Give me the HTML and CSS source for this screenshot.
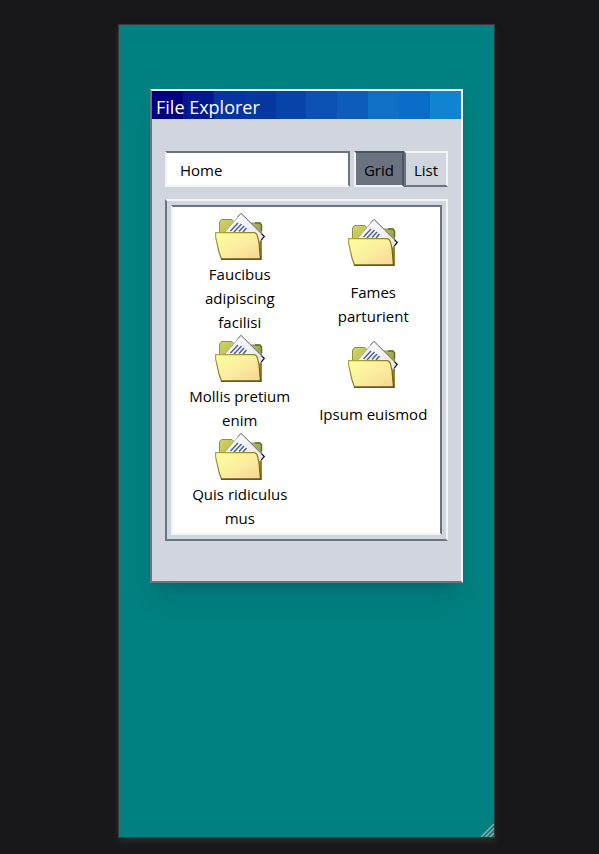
FILE: index.html
```html
<!DOCTYPE html>
<html lang="en">
<head>
<meta charset="utf-8">
<title>File Explorer</title>
<link rel="stylesheet" href="styles.css">
</head>
<body>
<svg class="defs" width="0" height="0" aria-hidden="true">
  <defs>
    <linearGradient id="front" x1="0" y1="0" x2="1" y2="1">
      <stop offset="0" stop-color="#ffffa2"/>
      <stop offset=".55" stop-color="#fbec9e"/>
      <stop offset="1" stop-color="#f5d592"/>
    </linearGradient>
    <linearGradient id="back" x1="0" y1="0" x2="1" y2="1">
      <stop offset="0" stop-color="#d3d565"/>
      <stop offset="1" stop-color="#7f8a36"/>
    </linearGradient>
    <linearGradient id="edge" x1="0" y1="0" x2="1" y2="1">
      <stop offset="0" stop-color="#b5a838"/>
      <stop offset="1" stop-color="#5c5114"/>
    </linearGradient>
    <linearGradient id="paper" x1="0" y1="0" x2="1" y2="1">
      <stop offset="0" stop-color="#ffffff"/>
      <stop offset="1" stop-color="#e6e6ec"/>
    </linearGradient>
    <symbol id="folder" viewBox="0 1 50 50">
      <path d="M4.500 23V11l2-2.500H17l3 3.500h25l1.500 2v34.500H7z" fill="url(#back)" stroke="#8e9635"/>
      <path d="M40 12h5l1.500 2v6" fill="none" stroke="#4f7435" stroke-width="1.500"/>
      <path d="M42 24h4l.5 24h-3z" fill="#8a7c2b"/>
      <path d="M26 2.300L49.300 25.500l-5 6L40 24H7.500z" fill="url(#paper)" stroke="#b3b3bb"/>
      <path d="M22.500 5.800L26 2.300 49.300 25.500l-5 6" fill="none" stroke="#77777f"/>
      <path d="M46.500 22.700l2.800 2.800-3 3.300" fill="none" stroke="#17171c" stroke-width="1.200"/>
      <path d="M15.500 20l7.500-8M19 21l7.500-8M24 20.500l5-5.500M28 21l3.500-4" stroke="#4d6690" stroke-width="1.500"/>
      <path d="M.6 21.600H39q2.500 0 3.500 3.500l1.500 6.500 1.500 16.500H6.500L4 41 .6 26z" fill="url(#front)" stroke="url(#edge)" stroke-width="1.200"/>
      <path d="M6 48.200h40.500" stroke="#67571c" stroke-width="1.500"/>
    </symbol>
  </defs>
</svg>
<main class="desktop">
  <section class="window" aria-label="File Explorer">
    <header class="titlebar"><h1>File Explorer</h1></header>
    <div class="body">
      <div class="toolbar">
        <input class="path" type="text" value="Home" aria-label="Path">
        <div class="views">
          <button class="view active" type="button" aria-pressed="true">Grid</button>
          <button class="view" type="button" aria-pressed="false">List</button>
        </div>
      </div>
      <div class="panel">
        <ul class="files">
          <li><svg class="icon" aria-hidden="true"><use href="#folder"/></svg><span>Faucibus adipiscing facilisi</span></li>
          <li><svg class="icon" aria-hidden="true"><use href="#folder"/></svg><span>Fames parturient</span></li>
          <li><svg class="icon" aria-hidden="true"><use href="#folder"/></svg><span>Mollis pretium enim</span></li>
          <li><svg class="icon" aria-hidden="true"><use href="#folder"/></svg><span>Ipsum euismod</span></li>
          <li><svg class="icon" aria-hidden="true"><use href="#folder"/></svg><span>Quis ridiculus mus</span></li>
        </ul>
      </div>
    </div>
  </section>
  <svg class="grip" viewBox="0 0 13 13" aria-hidden="true"><path d="M0 13L13 0M4.500 13L13 4.500M9 13l4-4" stroke="#a5a09c" stroke-width="1.500"/></svg>
</main>
</body>
</html>
```

FILE: styles.css
```css
* {
  box-sizing: border-box;
}

body {
  margin: 0;
  min-height: 100vh;
  display: flex;
  padding: 24px 104px 16px 118px;
  background: #18181a;
  color: #000;
  font: 15px/24px "Open Sans", "Noto Sans", sans-serif;
}

.defs {
  position: absolute;
}

.desktop {
  position: relative;
  flex: 1;
  min-width: 0;
  padding: 64px 31px;
  background: #008080;
  border: 1px solid #3a3a3c;
  box-shadow: 0 4px 6px #2a2a2c;
}

.window {
  background: #d1d5dd;
  border: 2px solid;
  border-color: #f3f4f6 #f3f4f6 #6b7280 #6b7280;
  box-shadow: 0 20px 25px -5px rgba(0, 0, 0, .1), 0 8px 10px -6px rgba(0, 0, 0, .1);
}

.titlebar {
  height: 28px;
  padding-left: 4px;
  background: linear-gradient(to right,
    #000080 10%, #001890 10% 20%,
    #0634a0 20% 30%, #0638a2 30% 40%,
    #0843aa 40% 50%, #0b50b2 50% 60%,
    #0d5cb9 60% 70%, #1070c6 70% 80%,
    #086cc8 80% 90%, #1084d0 90%);
}

h1 {
  margin: 0;
  color: #fff;
  font-size: 18px;
  font-weight: 400;
  line-height: 32px;
}

.body {
  padding: 32px 13px 40px;
}

.toolbar {
  display: flex;
  gap: 4px;
  height: 36px;
  margin-bottom: 12px;
}

.path {
  flex: 1;
  min-width: 0;
  padding: 2px 13px 0;
  color: inherit;
  font: inherit;
  background: #fff;
  border: 2px solid;
  border-color: #6b7280 #6b7280 #f3f4f6 #f3f4f6;
  border-radius: 0;
}

.views {
  display: flex;
}

.view {
  padding: 2px 8px 0;
  color: inherit;
  font: inherit;
  background: #d1d5dd;
  border: 2px solid;
  border-color: #f3f4f6 #f3f4f6 #6b7280 #6b7280;
}

.view.active {
  background: #6b7280;
  border-color: #4b5563 #4b5563 #f3f4f6 #f3f4f6;
}

.panel {
  padding: 4px;
  border: 2px solid;
  border-color: #f3f4f6 #f3f4f6 #6b7280 #6b7280;
}

.files {
  display: grid;
  grid-template-columns: 1fr 1fr;
  margin: 0;
  padding: 5px 0 3px;
  list-style: none;
  text-align: center;
  background: #fff;
  border: 2px solid;
  border-color: #6b7280 #6b7280 #f3f4f6 #f3f4f6;
}

.files li {
  display: flex;
  flex-direction: column;
  align-items: center;
  justify-content: space-around;
  padding: 0 12px;
}

.icon {
  width: 50px;
  height: 50px;
}

.grip {
  position: absolute;
  right: 0;
  bottom: 0;
  width: 13px;
  height: 13px;
}
```
